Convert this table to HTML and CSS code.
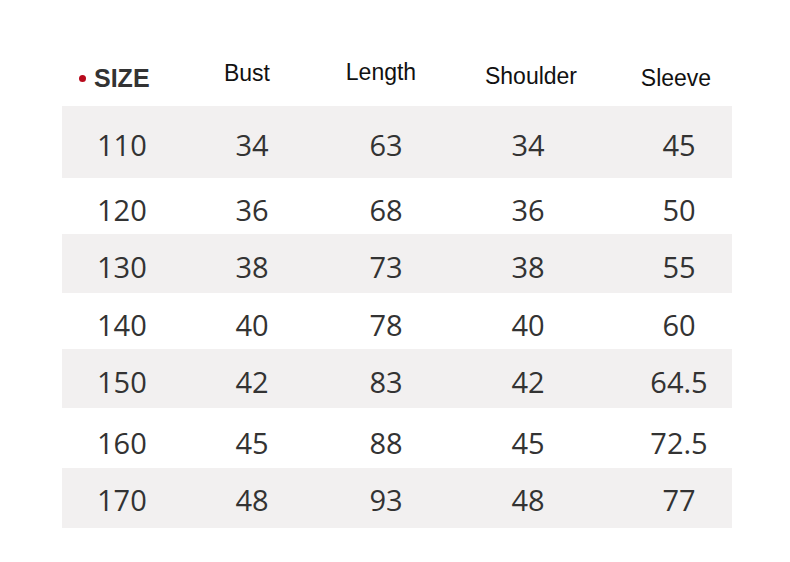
FILE: index.html
```html
<!DOCTYPE html>
<html>
<head>
<meta charset="utf-8">
<link rel="stylesheet" href="styles.css">
</head>
<body>
<div class="chart">
  <div class="row head">
    <div class="cell first"><span class="dot"></span><span class="size">SIZE</span></div>
    <div class="cell c2 h-bust">Bust</div>
    <div class="cell c3 h-length">Length</div>
    <div class="cell c4 h-shoulder">Shoulder</div>
    <div class="cell c5 h-sleeve">Sleeve</div>
  </div>
  <div class="row band r1"><div class="cell first">110</div><div class="cell c2">34</div><div class="cell c3">63</div><div class="cell c4">34</div><div class="cell c5">45</div></div>
  <div class="row r2"><div class="cell first">120</div><div class="cell c2">36</div><div class="cell c3">68</div><div class="cell c4">36</div><div class="cell c5">50</div></div>
  <div class="row band r3"><div class="cell first">130</div><div class="cell c2">38</div><div class="cell c3">73</div><div class="cell c4">38</div><div class="cell c5">55</div></div>
  <div class="row r4"><div class="cell first">140</div><div class="cell c2">40</div><div class="cell c3">78</div><div class="cell c4">40</div><div class="cell c5">60</div></div>
  <div class="row band r5"><div class="cell first">150</div><div class="cell c2">42</div><div class="cell c3">83</div><div class="cell c4">42</div><div class="cell c5">64.5</div></div>
  <div class="row r6"><div class="cell first">160</div><div class="cell c2">45</div><div class="cell c3">88</div><div class="cell c4">45</div><div class="cell c5">72.5</div></div>
  <div class="row band r7"><div class="cell first">170</div><div class="cell c2">48</div><div class="cell c3">93</div><div class="cell c4">48</div><div class="cell c5">77</div></div>
</div>
</body>
</html>
```
FILE: styles.css
```css
html, body {
  margin: 0;
  padding: 0;
  background: #ffffff;
}
.chart {
  width: 670px;
  margin-left: 62px;
  padding-top: 50px;
}
.row {
  display: grid;
  grid-template-columns: 124px 128px 140px 148px 130px;
  align-items: center;
  font-family: "Open Sans", "Noto Sans", sans-serif;
  font-size: 29px;
  color: #333333;
}
.band {
  background: #f2f0f0;
}
.cell {
  text-align: center;
  padding-top: 6px;
}
.cell.first {
  text-align: left;
  padding-left: 35px;
}
.cell.c2, .cell.c3 {
  padding-left: 4px;
}
.cell.c5 {
  padding-left: 24px;
}
.r1 { height: 72px; }
.r1 .cell { padding-top: 4px; }
.r2 { height: 56px; }
.r3 { height: 59px; }
.r4 { height: 56px; }
.r5 { height: 59px; }
.r6 { height: 60px; }
.r6 .cell { padding-top: 8px; }
.r7 { height: 60px; }
.r7 .cell { padding-top: 2px; }

.head {
  height: 56px;
  align-items: start;
  font-family: "Liberation Sans", Arial, sans-serif;
  font-size: 23px;
  color: #111111;
}
.head .cell { padding-top: 12px; }
.head .cell.first {
  display: flex;
  align-items: center;
  gap: 8px;
  padding-left: 17px;
  padding-top: 14px;
}
.dot {
  width: 7px;
  height: 7px;
  border-radius: 50%;
  background: #b80a1c;
}
.size {
  font-family: "Liberation Sans", Arial, sans-serif;
  font-weight: bold;
  font-size: 25px;
  color: #333333;
  line-height: 28px;
}
.head .h-bust { padding-top: 10px; padding-left: 0; padding-right: 6px; }
.head .h-length { padding-top: 9px; padding-left: 0; padding-right: 6px; }
.head .h-shoulder { padding-top: 13px; padding-left: 6px; }
.head .h-sleeve { padding-top: 15px; padding-left: 18px; }
```
